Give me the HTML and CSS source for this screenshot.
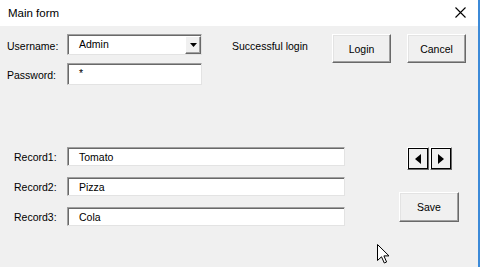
FILE: index.html
```html
<!DOCTYPE html>
<html>

<head>
    <title>Main form</title>
    <link rel="stylesheet" href="styles.css">
</head>

<body>
    <div class="window">
        <div class="titlebar">
            <span class="title">Main form</span>
            <span class="close">
                <svg width="11" height="11" viewBox="0 0 11 11">
                    <path d="M0.5 0.5 L10.5 10.5 M10.5 0.5 L0.5 10.5" stroke="#000" stroke-width="1.1" fill="none" />
                </svg>
            </span>
        </div>

        <div class="client">
            <div class="top-row">
                <div class="login-grid">
                    <label class="label">Username:</label>
                    <div class="combo">
                        <span class="combo-text">Admin</span>
                        <span class="combo-button">
                            <svg width="7" height="4" viewBox="0 0 7 4">
                                <path d="M0 0 L7 0 L3.5 4 Z" fill="#000" />
                            </svg>
                        </span>
                    </div>
                    <label class="label">Password:</label>
                    <div class="textbox password">*</div>
                </div>

                <div class="status">Successful login</div>

                <div class="buttons">
                    <button class="btn login-btn">Login</button>
                    <button class="btn cancel-btn">Cancel</button>
                </div>
            </div>

            <div class="records-row">
                <div class="records">
                    <label class="rec-label">Record1:</label>
                    <div class="textbox record">Tomato</div>
                    <label class="rec-label">Record2:</label>
                    <div class="textbox record">Pizza</div>
                    <label class="rec-label">Record3:</label>
                    <div class="textbox record">Cola</div>
                </div>

                <div class="side">
                    <div class="nav">
                        <button class="nav-btn">
                            <svg width="6" height="10" viewBox="0 0 6 10">
                                <path d="M6 0 L0 5 L6 10 Z" fill="#000" />
                            </svg>
                        </button>
                        <button class="nav-btn">
                            <svg width="6" height="10" viewBox="0 0 6 10">
                                <path d="M0 0 L6 5 L0 10 Z" fill="#000" />
                            </svg>
                        </button>
                    </div>
                    <button class="btn save-btn">Save</button>
                </div>
            </div>
        </div>

        <svg class="cursor" width="13" height="20" viewBox="0 0 13 20">
            <path d="M0.5 0.5 L0.5 16.5 L4.5 12.8 L7.3 19 L9.6 18 L6.9 11.9 L12 11.9 Z" fill="#fff" stroke="#000" stroke-width="1" />
        </svg>
    </div>
</body>

</html>
```

FILE: styles.css
```css
* {
    box-sizing: border-box;
}

body {
    margin: 0;
    font-family: "Liberation Sans", Arial, sans-serif;
    font-size: 10.5px;
    color: #000;
}

.window {
    position: relative;
    width: 480px;
    height: 267px;
    background-color: #f0f0f0;
    border-right: 2px solid #3c8ad8;
    overflow: hidden;
}

.titlebar {
    height: 26px;
    background-color: #fff;
    display: flex;
    align-items: center;
    justify-content: space-between;
    padding: 0 12px 0 8px;
}

.title {
    font-size: 11.5px;
    padding-bottom: 1px;
}

.close {
    display: flex;
    padding-bottom: 1px;
}

.client {
    padding: 8px 0 0 7px;
}

.top-row {
    display: flex;
    align-items: flex-start;
}

.login-grid {
    display: grid;
    grid-template-columns: 60px 135px;
    grid-template-rows: 21px 22px;
    row-gap: 8px;
    align-items: center;
}

.label {
    padding-top: 2px;
}

.combo {
    display: flex;
    height: 21px;
    background-color: #fff;
    border-top: 1px solid #a0a0a0;
    border-left: 1px solid #a0a0a0;
    border-right: 1px solid #e3e3e3;
    border-bottom: 1px solid #e3e3e3;
    box-shadow: inset 1px 1px 0 #696969;
}

.combo-text {
    flex: 1;
    padding: 3px 0 0 11px;
}

.combo-button {
    width: 16px;
    margin: 1px 0 0 0;
    display: flex;
    align-items: center;
    justify-content: center;
    background-color: #f0f0f0;
    border-top: 1px solid #fff;
    border-left: 1px solid #fff;
    border-right: 1px solid #696969;
    border-bottom: 1px solid #696969;
    box-shadow: inset -1px -1px 0 #a0a0a0;
}

.textbox {
    background-color: #fff;
    border-top: 1px solid #a0a0a0;
    border-left: 1px solid #a0a0a0;
    border-right: 1px solid #e3e3e3;
    border-bottom: 1px solid #e3e3e3;
    box-shadow: inset 1px 1px 0 #696969;
}

.password {
    height: 22px;
    padding: 3px 0 0 11px;
}

.status {
    width: 100px;
    margin-left: 30px;
    padding-top: 6px;
}

.buttons {
    display: flex;
    gap: 16px;
}

.btn {
    font-family: "Liberation Sans", Arial, sans-serif;
    font-size: 10.5px;
    color: #000;
    background-color: #f0f0f0;
    border-top: 1px solid #fff;
    border-left: 1px solid #fff;
    border-right: 1px solid #696969;
    border-bottom: 1px solid #696969;
    box-shadow: inset -1px -1px 0 #a0a0a0, inset 1px 1px 0 #e3e3e3;
    padding: 0;
}

.login-btn {
    width: 59px;
    height: 29px;
}

.cancel-btn {
    width: 59px;
    height: 29px;
}

.records-row {
    display: flex;
    margin-top: 62px;
}

.records {
    display: grid;
    grid-template-columns: 60px 278px;
    grid-auto-rows: 19px;
    row-gap: 11px;
    align-items: center;
}

.rec-label {
    padding-left: 7px;
}

.record {
    height: 19px;
    padding: 3px 0 0 11px;
}

.side {
    margin-left: 54px;
    display: flex;
    flex-direction: column;
    align-items: flex-start;
}

.nav {
    display: flex;
    margin-left: 8px;
    gap: 1px;
}

.nav-btn {
    width: 22px;
    height: 23px;
    padding: 0;
    display: flex;
    align-items: center;
    justify-content: center;
    background-color: #f0f0f0;
    border-top: 1px solid #fff;
    border-left: 1px solid #fff;
    border-right: 1px solid #696969;
    border-bottom: 1px solid #696969;
    box-shadow: inset 0 0 0 1px #000;
}

.save-btn {
    width: 60px;
    height: 30px;
    margin-top: 22px;
}

.cursor {
    position: absolute;
    left: 377px;
    top: 244px;
}
```
